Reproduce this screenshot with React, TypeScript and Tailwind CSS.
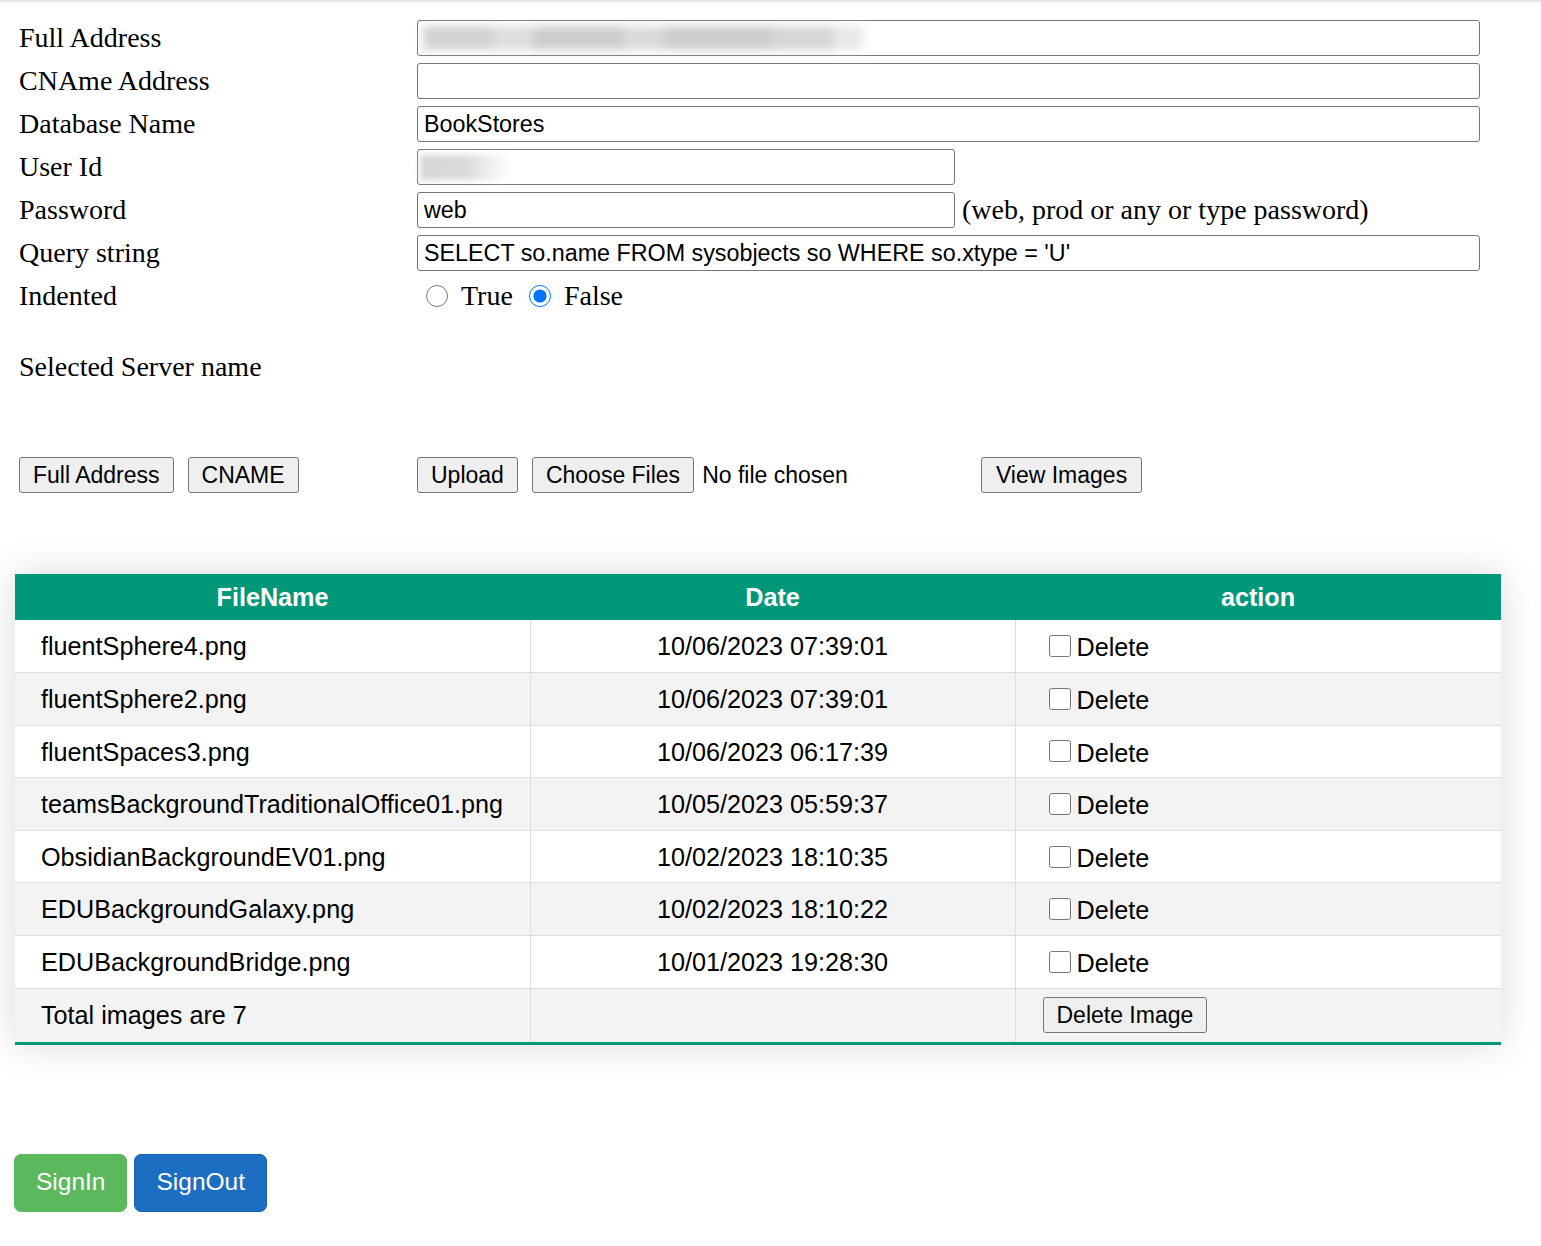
import React from 'react';

const serif = "font-['Liberation_Serif','Times_New_Roman',serif]";
const sans = "font-['Liberation_Sans',Arial,sans-serif]";

const rows = [
  { name: 'fluentSphere4.png', date: '10/06/2023 07:39:01' },
  { name: 'fluentSphere2.png', date: '10/06/2023 07:39:01' },
  { name: 'fluentSpaces3.png', date: '10/06/2023 06:17:39' },
  { name: 'teamsBackgroundTraditionalOffice01.png', date: '10/05/2023 05:59:37' },
  { name: 'ObsidianBackgroundEV01.png', date: '10/02/2023 18:10:35' },
  { name: 'EDUBackgroundGalaxy.png', date: '10/02/2023 18:10:22' },
  { name: 'EDUBackgroundBridge.png', date: '10/01/2023 19:28:30' },
];

const inputCls = `h-[36px] border border-[#767676] rounded-[3px] px-[6px] text-[23.3px] text-black outline-none ${sans}`;
const btnCls = `h-[36px] px-[13px] bg-[#efefef] border border-[#767676] rounded-[3px] text-[23px] text-black ${sans}`;

const FormRow = ({ label, children }: { label: string; children: React.ReactNode }) => (
  <div className="flex items-center h-[36px] mb-[7px]">
    <div className={`w-[398px] text-[28px] leading-[30px] text-black ${serif}`}>{label}</div>
    {children}
  </div>
);

export default function App() {
  return (
    <div className="min-h-screen bg-white border-t-2 border-[#e6e6e6]">
      <div className="pl-[19px] pt-[18px]">
        <FormRow label="Full Address">
          <div className="relative">
            <input className={`${inputCls} w-[1063px]`} readOnly />
            <div className="absolute left-[6px] top-[6px] h-[24px] w-[440px] flex blur-[5px] pointer-events-none">
              <div className="w-[70px] bg-[#d2d2d2]" />
              <div className="w-[40px] bg-[#dedede]" />
              <div className="w-[90px] bg-[#cdcdcd]" />
              <div className="w-[40px] bg-[#dadada]" />
              <div className="w-[110px] bg-[#cecece]" />
              <div className="w-[60px] bg-[#d6d6d6]" />
              <div className="w-[30px] bg-[#e8e8e8]" />
            </div>
          </div>
        </FormRow>
        <FormRow label="CNAme Address">
          <input className={`${inputCls} w-[1063px]`} readOnly />
        </FormRow>
        <FormRow label="Database Name">
          <input className={`${inputCls} w-[1063px]`} defaultValue="BookStores" />
        </FormRow>
        <FormRow label="User Id">
          <div className="relative">
            <input className={`${inputCls} w-[538px]`} readOnly />
            <div className="absolute left-[3px] top-[6px] h-[25px] w-[90px] bg-gradient-to-r from-[#d6d6d6] via-[#dadada] to-white blur-[3px] pointer-events-none" />
          </div>
        </FormRow>
        <FormRow label="Password">
          <input className={`${inputCls} w-[538px]`} defaultValue="web" />
          <span className={`ml-[7px] text-[28px] text-black ${serif}`}>(web, prod or any or type password)</span>
        </FormRow>
        <FormRow label="Query string">
          <input
            className={`${inputCls} w-[1063px]`}
            defaultValue="SELECT so.name FROM sysobjects so WHERE so.xtype = 'U'"
          />
        </FormRow>
        <FormRow label="Indented">
          <div className={`flex items-center text-[28px] text-black ${serif}`}>
            <input type="radio" name="indent" className="w-[22px] h-[22px] m-0 ml-[9px]" />
            <span className="ml-[13px]">True</span>
            <input type="radio" name="indent" defaultChecked className="w-[22px] h-[22px] m-0 ml-[16px]" />
            <span className="ml-[13px]">False</span>
          </div>
        </FormRow>

        <div className={`mt-[38px] h-[30px] leading-[30px] text-[28px] text-black ${serif}`}>Selected Server name</div>

        <div className="mt-[75px] flex items-center">
          <div className="w-[398px] flex items-center gap-[14px]">
            <button className={btnCls}>Full Address</button>
            <button className={btnCls}>CNAME</button>
          </div>
          <button className={btnCls}>Upload</button>
          <button className={`${btnCls} ml-[14px]`}>Choose Files</button>
          <span className={`ml-[8px] text-[23px] text-black ${sans}`}>No file chosen</span>
          <button className={`${btnCls} ml-[133px] px-[14px]`}>View Images</button>
        </div>
      </div>

      <div className="pl-[15px] mt-[81px]">
        <table className={`table-fixed border-collapse w-[1486px] shadow-[0_0_35px_rgba(0,0,0,0.15)] text-[25.2px] text-black ${sans}`}>
          <colgroup>
            <col className="w-[515px]" />
            <col className="w-[485px]" />
            <col className="w-[486px]" />
          </colgroup>
          <thead>
            <tr className="bg-[#009879] text-white h-[46px]">
              <th className="font-bold text-center pt-[2px]">FileName</th>
              <th className="font-bold text-center pt-[2px]">Date</th>
              <th className="font-bold text-center pt-[2px]">action</th>
            </tr>
          </thead>
          <tbody>
            {rows.map((r, i) => (
              <tr key={r.name} className={`h-[52.6px] border-b border-[#dddddd] ${i % 2 === 1 ? 'bg-[#f3f3f3]' : 'bg-white'}`}>
                <td className="pl-[26px] pt-[2px] border-r border-[#dddddd] whitespace-nowrap">{r.name}</td>
                <td className="text-center pt-[2px] border-r border-[#dddddd]">{r.date}</td>
                <td className="pl-[33px]">
                  <label className="flex items-center">
                    <input type="checkbox" className="w-[22px] h-[22px] m-0" />
                    <span className="ml-[6px] pt-[4px]">Delete</span>
                  </label>
                </td>
              </tr>
            ))}
            <tr className="h-[55px] bg-[#f3f3f3] border-b-[3px] border-[#009879]">
              <td className="pl-[26px] pt-[2px] border-r border-[#dddddd]">Total images are 7</td>
              <td className="border-r border-[#dddddd]" />
              <td className="pl-[27px]">
                <button className={`${btnCls} h-[35px] px-[13px]`}>Delete Image</button>
              </td>
            </tr>
          </tbody>
        </table>
      </div>

      <div className="pl-[14px] mt-[109px] pb-[34px] flex gap-[7px]">
        <button className={`h-[58px] px-[21px] rounded-[7px] bg-[#5cb85c] border border-[#5cb85c] text-white text-[24.5px] ${sans}`}>SignIn</button>
        <button className={`h-[58px] px-[21px] rounded-[7px] bg-[#1b6ec2] border border-[#1861ac] text-white text-[24.5px] ${sans}`}>SignOut</button>
      </div>
    </div>
  );
}
